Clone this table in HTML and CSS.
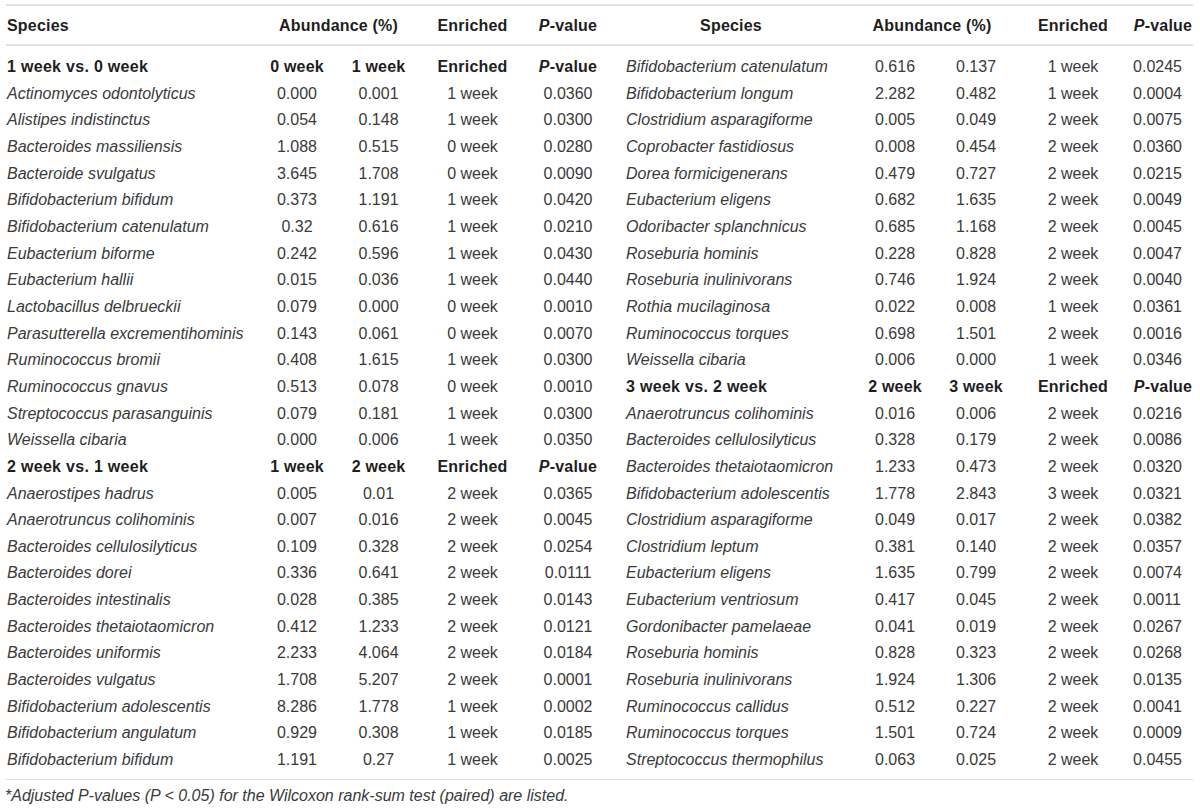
FILE: index.html
```html
<!DOCTYPE html>
<html>
<head>
<meta charset="utf-8">
<link rel="stylesheet" href="styles.css">
</head>
<body>
<div class="page">
<table class="tbl">
<colgroup>
<col class="w-sp1"><col class="w-a"><col class="w-b"><col class="w-e"><col class="w-p">
<col class="w-sp2"><col class="w-a2"><col class="w-b2"><col class="w-e2"><col class="w-p2">
</colgroup>
<thead>
<tr>
<th class="left">Species</th><th colspan="2">Abundance (%)</th><th>Enriched</th><th><i>P</i>-value</th>
<th class="sp2h">Species</th><th colspan="2">Abundance (%)</th><th>Enriched</th><th><i>P</i>-value</th>
</tr>
</thead>
<tbody>
<tr class="first"><td class="grp">1 week vs. 0 week</td><td class="b">0 week</td><td class="b">1 week</td><td class="b">Enriched</td><td class="b"><i>P</i>-value</td>
<td class="sp r">Bifidobacterium catenulatum</td><td>0.616</td><td>0.137</td><td>1 week</td><td class="pv">0.0245</td></tr>
<tr><td class="sp">Actinomyces odontolyticus</td><td>0.000</td><td>0.001</td><td>1 week</td><td>0.0360</td>
<td class="sp r">Bifidobacterium longum</td><td>2.282</td><td>0.482</td><td>1 week</td><td class="pv">0.0004</td></tr>
<tr><td class="sp">Alistipes indistinctus</td><td>0.054</td><td>0.148</td><td>1 week</td><td>0.0300</td>
<td class="sp r">Clostridium asparagiforme</td><td>0.005</td><td>0.049</td><td>2 week</td><td class="pv">0.0075</td></tr>
<tr><td class="sp">Bacteroides massiliensis</td><td>1.088</td><td>0.515</td><td>0 week</td><td>0.0280</td>
<td class="sp r">Coprobacter fastidiosus</td><td>0.008</td><td>0.454</td><td>2 week</td><td class="pv">0.0360</td></tr>
<tr><td class="sp">Bacteroide svulgatus</td><td>3.645</td><td>1.708</td><td>0 week</td><td>0.0090</td>
<td class="sp r">Dorea formicigenerans</td><td>0.479</td><td>0.727</td><td>2 week</td><td class="pv">0.0215</td></tr>
<tr><td class="sp">Bifidobacterium bifidum</td><td>0.373</td><td>1.191</td><td>1 week</td><td>0.0420</td>
<td class="sp r">Eubacterium eligens</td><td>0.682</td><td>1.635</td><td>2 week</td><td class="pv">0.0049</td></tr>
<tr><td class="sp">Bifidobacterium catenulatum</td><td>0.32</td><td>0.616</td><td>1 week</td><td>0.0210</td>
<td class="sp r">Odoribacter splanchnicus</td><td>0.685</td><td>1.168</td><td>2 week</td><td class="pv">0.0045</td></tr>
<tr><td class="sp">Eubacterium biforme</td><td>0.242</td><td>0.596</td><td>1 week</td><td>0.0430</td>
<td class="sp r">Roseburia hominis</td><td>0.228</td><td>0.828</td><td>2 week</td><td class="pv">0.0047</td></tr>
<tr><td class="sp">Eubacterium hallii</td><td>0.015</td><td>0.036</td><td>1 week</td><td>0.0440</td>
<td class="sp r">Roseburia inulinivorans</td><td>0.746</td><td>1.924</td><td>2 week</td><td class="pv">0.0040</td></tr>
<tr><td class="sp">Lactobacillus delbrueckii</td><td>0.079</td><td>0.000</td><td>0 week</td><td>0.0010</td>
<td class="sp r">Rothia mucilaginosa</td><td>0.022</td><td>0.008</td><td>1 week</td><td class="pv">0.0361</td></tr>
<tr><td class="sp">Parasutterella excrementihominis</td><td>0.143</td><td>0.061</td><td>0 week</td><td>0.0070</td>
<td class="sp r">Ruminococcus torques</td><td>0.698</td><td>1.501</td><td>2 week</td><td class="pv">0.0016</td></tr>
<tr><td class="sp">Ruminococcus bromii</td><td>0.408</td><td>1.615</td><td>1 week</td><td>0.0300</td>
<td class="sp r">Weissella cibaria</td><td>0.006</td><td>0.000</td><td>1 week</td><td class="pv">0.0346</td></tr>
<tr><td class="sp">Ruminococcus gnavus</td><td>0.513</td><td>0.078</td><td>0 week</td><td>0.0010</td>
<td class="grp r">3 week vs. 2 week</td><td class="b">2 week</td><td class="b">3 week</td><td class="b">Enriched</td><td class="b"><i>P</i>-value</td></tr>
<tr><td class="sp">Streptococcus parasanguinis</td><td>0.079</td><td>0.181</td><td>1 week</td><td>0.0300</td>
<td class="sp r">Anaerotruncus colihominis</td><td>0.016</td><td>0.006</td><td>2 week</td><td class="pv">0.0216</td></tr>
<tr><td class="sp">Weissella cibaria</td><td>0.000</td><td>0.006</td><td>1 week</td><td>0.0350</td>
<td class="sp r">Bacteroides cellulosilyticus</td><td>0.328</td><td>0.179</td><td>2 week</td><td class="pv">0.0086</td></tr>
<tr><td class="grp">2 week vs. 1 week</td><td class="b">1 week</td><td class="b">2 week</td><td class="b">Enriched</td><td class="b"><i>P</i>-value</td>
<td class="sp r">Bacteroides thetaiotaomicron</td><td>1.233</td><td>0.473</td><td>2 week</td><td class="pv">0.0320</td></tr>
<tr><td class="sp">Anaerostipes hadrus</td><td>0.005</td><td>0.01</td><td>2 week</td><td>0.0365</td>
<td class="sp r">Bifidobacterium adolescentis</td><td>1.778</td><td>2.843</td><td>3 week</td><td class="pv">0.0321</td></tr>
<tr><td class="sp">Anaerotruncus colihominis</td><td>0.007</td><td>0.016</td><td>2 week</td><td>0.0045</td>
<td class="sp r">Clostridium asparagiforme</td><td>0.049</td><td>0.017</td><td>2 week</td><td class="pv">0.0382</td></tr>
<tr><td class="sp">Bacteroides cellulosilyticus</td><td>0.109</td><td>0.328</td><td>2 week</td><td>0.0254</td>
<td class="sp r">Clostridium leptum</td><td>0.381</td><td>0.140</td><td>2 week</td><td class="pv">0.0357</td></tr>
<tr><td class="sp">Bacteroides dorei</td><td>0.336</td><td>0.641</td><td>2 week</td><td>0.0111</td>
<td class="sp r">Eubacterium eligens</td><td>1.635</td><td>0.799</td><td>2 week</td><td class="pv">0.0074</td></tr>
<tr><td class="sp">Bacteroides intestinalis</td><td>0.028</td><td>0.385</td><td>2 week</td><td>0.0143</td>
<td class="sp r">Eubacterium ventriosum</td><td>0.417</td><td>0.045</td><td>2 week</td><td class="pv">0.0011</td></tr>
<tr><td class="sp">Bacteroides thetaiotaomicron</td><td>0.412</td><td>1.233</td><td>2 week</td><td>0.0121</td>
<td class="sp r">Gordonibacter pamelaeae</td><td>0.041</td><td>0.019</td><td>2 week</td><td class="pv">0.0267</td></tr>
<tr><td class="sp">Bacteroides uniformis</td><td>2.233</td><td>4.064</td><td>2 week</td><td>0.0184</td>
<td class="sp r">Roseburia hominis</td><td>0.828</td><td>0.323</td><td>2 week</td><td class="pv">0.0268</td></tr>
<tr><td class="sp">Bacteroides vulgatus</td><td>1.708</td><td>5.207</td><td>2 week</td><td>0.0001</td>
<td class="sp r">Roseburia inulinivorans</td><td>1.924</td><td>1.306</td><td>2 week</td><td class="pv">0.0135</td></tr>
<tr><td class="sp">Bifidobacterium adolescentis</td><td>8.286</td><td>1.778</td><td>1 week</td><td>0.0002</td>
<td class="sp r">Ruminococcus callidus</td><td>0.512</td><td>0.227</td><td>2 week</td><td class="pv">0.0041</td></tr>
<tr><td class="sp">Bifidobacterium angulatum</td><td>0.929</td><td>0.308</td><td>1 week</td><td>0.0185</td>
<td class="sp r">Ruminococcus torques</td><td>1.501</td><td>0.724</td><td>2 week</td><td class="pv">0.0009</td></tr>
<tr class="last"><td class="sp">Bifidobacterium bifidum</td><td>1.191</td><td>0.27</td><td>1 week</td><td>0.0025</td>
<td class="sp r">Streptococcus thermophilus</td><td>0.063</td><td>0.025</td><td>2 week</td><td class="pv">0.0455</td></tr>
</tbody>
</table>
<p class="note">*Adjusted P-values (P &lt; 0.05) for the Wilcoxon rank-sum test (paired) are listed.</p>
</div>
</body>
</html>
```

FILE: styles.css
```css
html, body {
  margin: 0;
  padding: 0;
  background: #ffffff;
}
body {
  font-family: "Liberation Sans", Arial, Helvetica, sans-serif;
  color: #333333;
}
.page {
  padding: 4px 7px 0 6px;
}
.tbl {
  width: 1187px;
  border-collapse: collapse;
  table-layout: fixed;
  font-size: 16px;
}
.w-sp1 { width: 251px; }
.w-a { width: 80px; }
.w-b { width: 83px; }
.w-e { width: 105px; }
.w-p { width: 86px; }
.w-sp2 { width: 240px; }
.w-a2 { width: 88px; }
.w-b2 { width: 74px; }
.w-e2 { width: 120px; }
.w-p2 { width: 60px; }

.tbl thead tr {
  border-top: 2px solid #e3e3e3;
  border-bottom: 2px solid #e3e3e3;
}
.tbl th {
  font-weight: bold;
  color: #1e1e1e;
  line-height: 36px;
  padding: 2px 0 0 0;
  text-align: center;
  white-space: nowrap;
  letter-spacing: 0.2px;
}
.tbl th.left {
  text-align: left;
  padding-left: 1px;
}
.tbl td {
  padding: 0;
  line-height: 26.65px;
  text-align: center;
  white-space: nowrap;
  color: #3a3a3a;
}
.tbl tr.first td { padding-top: 8px; }
.tbl tr.last td { padding-bottom: 5px; }
.tbl tbody { border-bottom: 1px solid #dcdcdc; }
.tbl td.sp {
  text-align: left;
  font-style: italic;
  padding-left: 1px;
}
.tbl td.grp {
  text-align: left;
  font-weight: bold;
  color: #1e1e1e;
  padding-left: 1px;
  letter-spacing: 0.3px;
}
.tbl td.r { padding-left: 15px; }
.tbl td.b {
  font-weight: bold;
  color: #1e1e1e;
  letter-spacing: 0.2px;
}
.tbl td.pv { padding-right: 22px; }
.note {
  margin: 7px 0 0 -1px;
  font-size: 16px;
  line-height: 18px;
  font-style: italic;
  color: #3a3a3a;
}
```
